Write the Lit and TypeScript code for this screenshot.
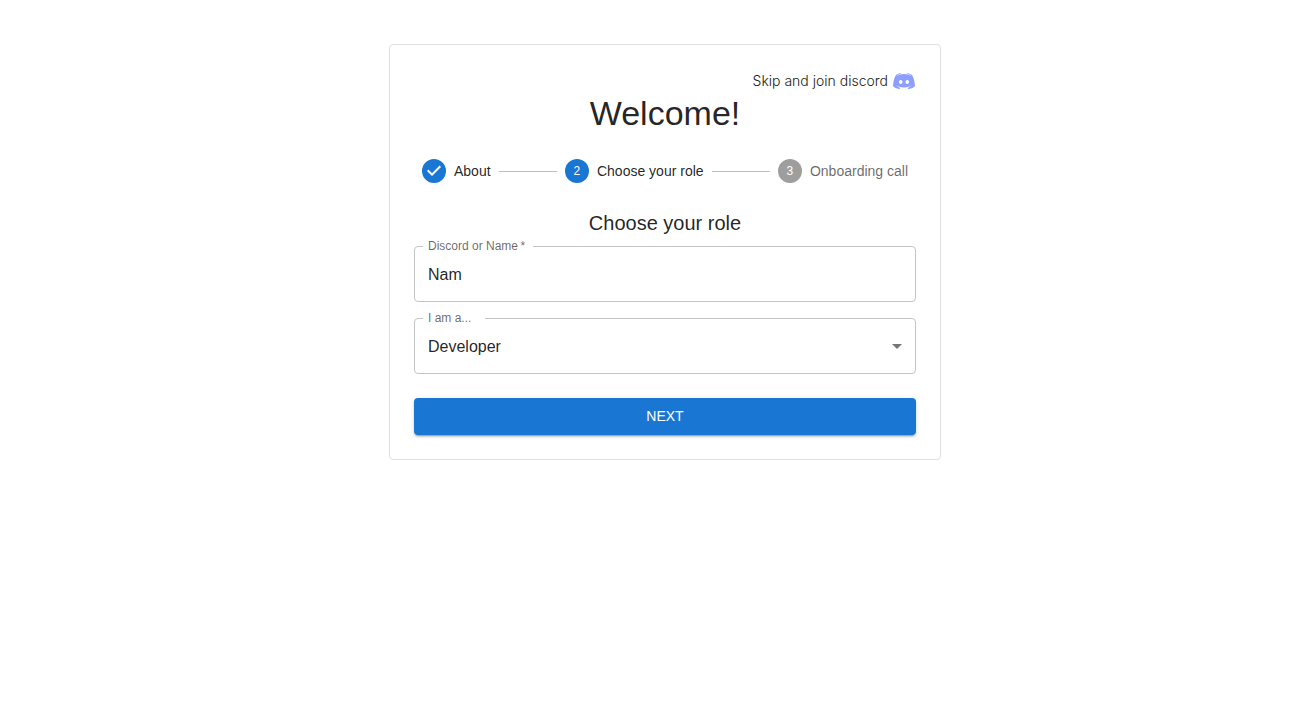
import { LitElement, html, css, nothing } from "lit";
import { customElement, property, state } from "lit/decorators.js";

type StepState = "done" | "active" | "pending";

@customElement("step-list")
class StepList extends LitElement {
  @property({ attribute: false }) steps: string[] = [];
  @property({ type: Number }) active = 0;

  static styles = css`
    :host {
      display: block;
    }
    .steps {
      display: flex;
      align-items: center;
      margin: 0;
      padding: 0;
      list-style: none;
    }
    .step {
      display: flex;
      align-items: center;
      gap: 8px;
      padding: 0 8px;
      font-size: 14px;
      line-height: 20px;
      white-space: nowrap;
      color: rgba(0, 0, 0, 0.87);
    }
    .pending {
      color: rgba(0, 0, 0, 0.6);
    }
    .line {
      flex: 1;
      height: 1px;
      background: #bdbdbd;
    }
    .mark {
      display: block;
      width: 24px;
      height: 24px;
      border-radius: 50%;
      background: #1976d2;
      color: #fff;
      font-size: 12px;
      line-height: 24px;
      text-align: center;
    }
    .pending .mark {
      background: #9e9e9e;
    }
    .check {
      display: block;
      fill: #1976d2;
    }
  `;

  private stateOf(index: number): StepState {
    if (index < this.active) return "done";
    return index === this.active ? "active" : "pending";
  }

  render() {
    return html`
      <ol class="steps">
        ${this.steps.map((label, i) => {
          const status = this.stateOf(i);
          return html`
            ${i > 0 ? html`<li class="line" role="presentation"></li>` : nothing}
            <li class="step ${status}" aria-current=${status === "active" ? "step" : nothing}>
              ${status === "done"
                ? html`<svg class="check" width="24" height="24" viewBox="0 0 24 24" aria-hidden="true">
                    <path d="M12 0a12 12 0 1 0 0 24 12 12 0 0 0 0-24zm-2 17l-5-5 1.4-1.4 3.6 3.6 7.6-7.6L19 8l-9 9z" />
                  </svg>`
                : html`<span class="mark">${i + 1}</span>`}
              <span>${label}</span>
            </li>
          `;
        })}
      </ol>
    `;
  }
}

@customElement("app-root")
class AppRoot extends LitElement {
  @state() private name = "Nam";
  @state() private role = "Developer";

  private steps = ["About", "Choose your role", "Onboarding call"];
  private roles = ["Developer", "Designer", "Product manager"];

  static styles = css`
    :host {
      display: block;
      padding: 44px 24px 24px 44px;
      font-family: "Liberation Sans", Helvetica, Arial, sans-serif;
      color: rgba(0, 0, 0, 0.87);
    }
    .card {
      box-sizing: border-box;
      max-width: 552px;
      margin: 0 auto;
      padding: 24px;
      border: 1px solid #e0e0e0;
      border-radius: 4px;
      background: #fff;
    }
    .skip {
      display: flex;
      justify-content: flex-end;
    }
    .skip-link {
      display: flex;
      align-items: center;
      gap: 4px;
      font-family: Inter, "Liberation Sans", sans-serif;
      font-weight: 300;
      font-size: 14px;
      line-height: 24px;
      color: #212121;
      text-decoration: none;
    }
    .discord {
      display: block;
      fill: #8c9eff;
    }
    .title {
      margin: 0 0 26px;
      font-size: 34px;
      line-height: 40px;
      font-weight: 400;
      text-align: center;
    }
    .subtitle {
      margin: 24px 0 1px;
      font-size: 20px;
      line-height: 32px;
      font-weight: 400;
      text-align: center;
    }
    .form {
      display: flex;
      flex-direction: column;
      gap: 10px;
    }
    .field {
      min-width: 0;
      margin: 0;
      padding: 0 8px;
      border: 1px solid #c4c4c4;
      border-radius: 4px;
    }
    .legend {
      padding: 0 8px 0 5px;
      font-size: 12px;
      line-height: 13px;
      color: rgba(0, 0, 0, 0.6);
    }
    .legend-wide {
      padding-right: 14px;
    }
    .control {
      display: block;
      box-sizing: border-box;
      width: 100%;
      height: 48px;
      padding: 0 5px 6px;
      border: 0;
      outline: 0;
      background: transparent;
      appearance: none;
      font: inherit;
      font-size: 16px;
      color: inherit;
    }
    input.control {
      padding-bottom: 4px;
    }
    .picker {
      display: grid;
      align-items: center;
    }
    .picker > * {
      grid-area: 1 / 1;
    }
    .arrow {
      justify-self: end;
      margin: 0 -2px 6px 0;
      fill: rgba(0, 0, 0, 0.54);
      pointer-events: none;
    }
    .next {
      margin-top: 14px;
      height: 37px;
      padding: 0 16px 2px;
      border: 0;
      border-radius: 4px;
      background: #1976d2;
      color: #fff;
      font: inherit;
      font-size: 14px;
      text-transform: uppercase;
      cursor: pointer;
      box-shadow: 0 3px 1px -2px rgba(0, 0, 0, 0.2), 0 2px 2px 0 rgba(0, 0, 0, 0.14),
        0 1px 5px 0 rgba(0, 0, 0, 0.12);
    }
  `;

  render() {
    return html`
      <main class="card">
        <div class="skip">
          <a class="skip-link" href="#discord">
            Skip and join discord
            <svg class="discord" width="24" height="24" viewBox="0 0 48 48" aria-hidden="true">
              <path
                d="M40,12c0,0-4.585-3.588-10-4l-0.488,0.976C34.408,10.174,36.654,11.891,39,14c-4.045-2.065-8.039-4-15-4s-10.955,1.935-15,4c2.346-2.109,5.018-4.015,9.488-5.024L18,8c-5.681,0.537-10,4-10,4s-5.121,7.425-6,22c5.162,5.953,13,6,13,6l1.639-2.185C13.857,36.848,10.715,35.121,8,32c3.238,2.45,8.125,5,16,5s12.762-2.55,16-5c-2.715,3.121-5.857,4.848-8.639,5.815L33,40c0,0,7.838-0.047,13-6C45.121,19.425,40,12,40,12z M17.5,30c-1.933,0-3.5-1.791-3.5-4c0-2.209,1.567-4,3.5-4s3.5,1.791,3.5,4C21,28.209,19.433,30,17.5,30z M30.5,30c-1.933,0-3.5-1.791-3.5-4c0-2.209,1.567-4,3.5-4s3.5,1.791,3.5,4C34,28.209,32.433,30,30.5,30z"
              />
            </svg>
          </a>
        </div>
        <h1 class="title">Welcome!</h1>
        <step-list .steps=${this.steps} .active=${1}></step-list>
        <h2 class="subtitle">Choose your role</h2>
        <form class="form" @submit=${(e: Event) => e.preventDefault()}>
          <fieldset class="field">
            <legend class="legend"><label for="name">Discord or Name&thinsp;*</label></legend>
            <input
              class="control"
              id="name"
              type="text"
              required
              .value=${this.name}
              @input=${(e: Event) => (this.name = (e.target as HTMLInputElement).value)}
            />
          </fieldset>
          <fieldset class="field">
            <legend class="legend legend-wide"><label for="role">I am a...</label></legend>
            <div class="picker">
              <select
                class="control"
                id="role"
                @change=${(e: Event) => (this.role = (e.target as HTMLSelectElement).value)}
              >
                ${this.roles.map((r) => html`<option ?selected=${r === this.role}>${r}</option>`)}
              </select>
              <svg class="arrow" width="24" height="24" viewBox="0 0 24 24" aria-hidden="true">
                <path d="M7 10l5 5 5-5z" />
              </svg>
            </div>
          </fieldset>
          <button class="next" type="submit">Next</button>
        </form>
      </main>
    `;
  }
}
